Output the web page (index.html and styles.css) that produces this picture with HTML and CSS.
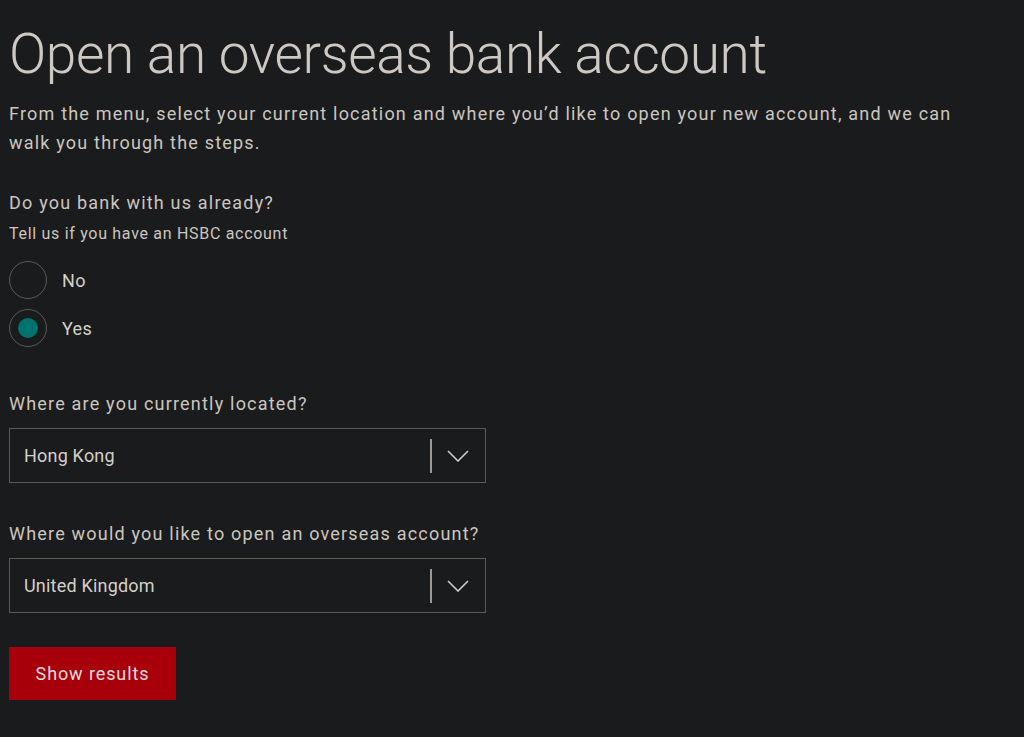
FILE: index.html
```html
<!DOCTYPE html>
<html lang="en">
<head>
    <meta charset="utf-8">
    <title>Open an overseas bank account</title>
    <link rel="stylesheet" href="styles.css">
</head>
<body>
    <main class="page">
        <h1 class="title">Open an overseas bank account</h1>
        <p class="intro">From the menu, select your current location and where you’d like to open your new account, and we can walk you through the steps.</p>

        <fieldset class="question">
            <legend class="label">Do you bank with us already?</legend>
            <div class="hint">Tell us if you have an HSBC account</div>
            <div class="radios">
                <label class="radio">
                    <input type="radio" name="existing" value="no">
                    <span class="dot"></span>
                    <span class="radio-text">No</span>
                </label>
                <label class="radio">
                    <input type="radio" name="existing" value="yes" checked>
                    <span class="dot"></span>
                    <span class="radio-text">Yes</span>
                </label>
            </div>
        </fieldset>

        <div class="field">
            <div class="label">Where are you currently located?</div>
            <div class="select">
                <span class="select-value">Hong Kong</span>
                <span class="select-sep"></span>
                <svg class="chevron" width="22" height="12" viewBox="0 0 22 12"><path d="M1 1 L11 11 L21 1" fill="none" stroke="#d0cbc4" stroke-width="1.6"/></svg>
            </div>
        </div>

        <div class="field">
            <div class="label">Where would you like to open an overseas account?</div>
            <div class="select">
                <span class="select-value">United Kingdom</span>
                <span class="select-sep"></span>
                <svg class="chevron" width="22" height="12" viewBox="0 0 22 12"><path d="M1 1 L11 11 L21 1" fill="none" stroke="#d0cbc4" stroke-width="1.6"/></svg>
            </div>
        </div>

        <button class="btn-primary" type="button">Show results</button>
    </main>
</body>
</html>
```

FILE: styles.css
```css
* {
    box-sizing: border-box;
}

body {
    margin: 0;
    background-color: #1a1b1d;
    color: #cbc6bf;
    font-family: Roboto, "Liberation Sans", sans-serif;
}

.page {
    padding: 0 9px;
}

.title {
    margin: 22px 0 0;
    font-size: 55px;
    font-weight: 300;
    line-height: 64px;
    letter-spacing: -0.4px;
    color: #cdc8c1;
}

.intro {
    margin: 13px 0 0;
    font-size: 18px;
    line-height: 29px;
    letter-spacing: 1.2px;
    max-width: 960px;
}

.question {
    border: 0;
    margin: 34px 0 0;
    padding: 0;
}

.label {
    padding: 0;
    font-size: 18px;
    line-height: 24px;
    letter-spacing: 1.2px;
}

.hint {
    margin-top: 8px;
    font-size: 16px;
    line-height: 22px;
    letter-spacing: 0.7px;
}

.radios {
    margin-top: 16px;
    display: flex;
    flex-direction: column;
    gap: 10px;
}

.radio {
    display: flex;
    align-items: center;
    gap: 15px;
    cursor: pointer;
}

.radio input {
    display: none;
}

.dot {
    width: 38px;
    height: 38px;
    border: 1px solid #5d5852;
    border-radius: 50%;
    display: flex;
    align-items: center;
    justify-content: center;
}

.radio input:checked + .dot::after {
    content: "";
    width: 20px;
    height: 20px;
    border-radius: 50%;
    background-color: #00736e;
}

.radio-text {
    font-size: 18px;
    letter-spacing: 0.3px;
    color: #d4d0ca;
}

.field {
    margin-top: 45px;
}

.field + .field {
    margin-top: 39px;
}

.select {
    margin-top: 12px;
    width: 477px;
    height: 55px;
    border: 1px solid #5d5852;
    display: flex;
    align-items: center;
    padding: 0 16px 0 14px;
}

.select-value {
    flex: 1;
    font-size: 18px;
    letter-spacing: 0.2px;
    color: #d4d0ca;
}

.select-sep {
    width: 2px;
    height: 34px;
    background-color: #9e9992;
    margin-right: 15px;
}

.btn-primary {
    margin-top: 34px;
    width: 167px;
    height: 53px;
    border: 0;
    border-radius: 0;
    background-color: #a8000b;
    color: #e6dcdc;
    font-family: Roboto, "Liberation Sans", sans-serif;
    font-size: 18px;
    letter-spacing: 0.9px;
    cursor: pointer;
}
```
